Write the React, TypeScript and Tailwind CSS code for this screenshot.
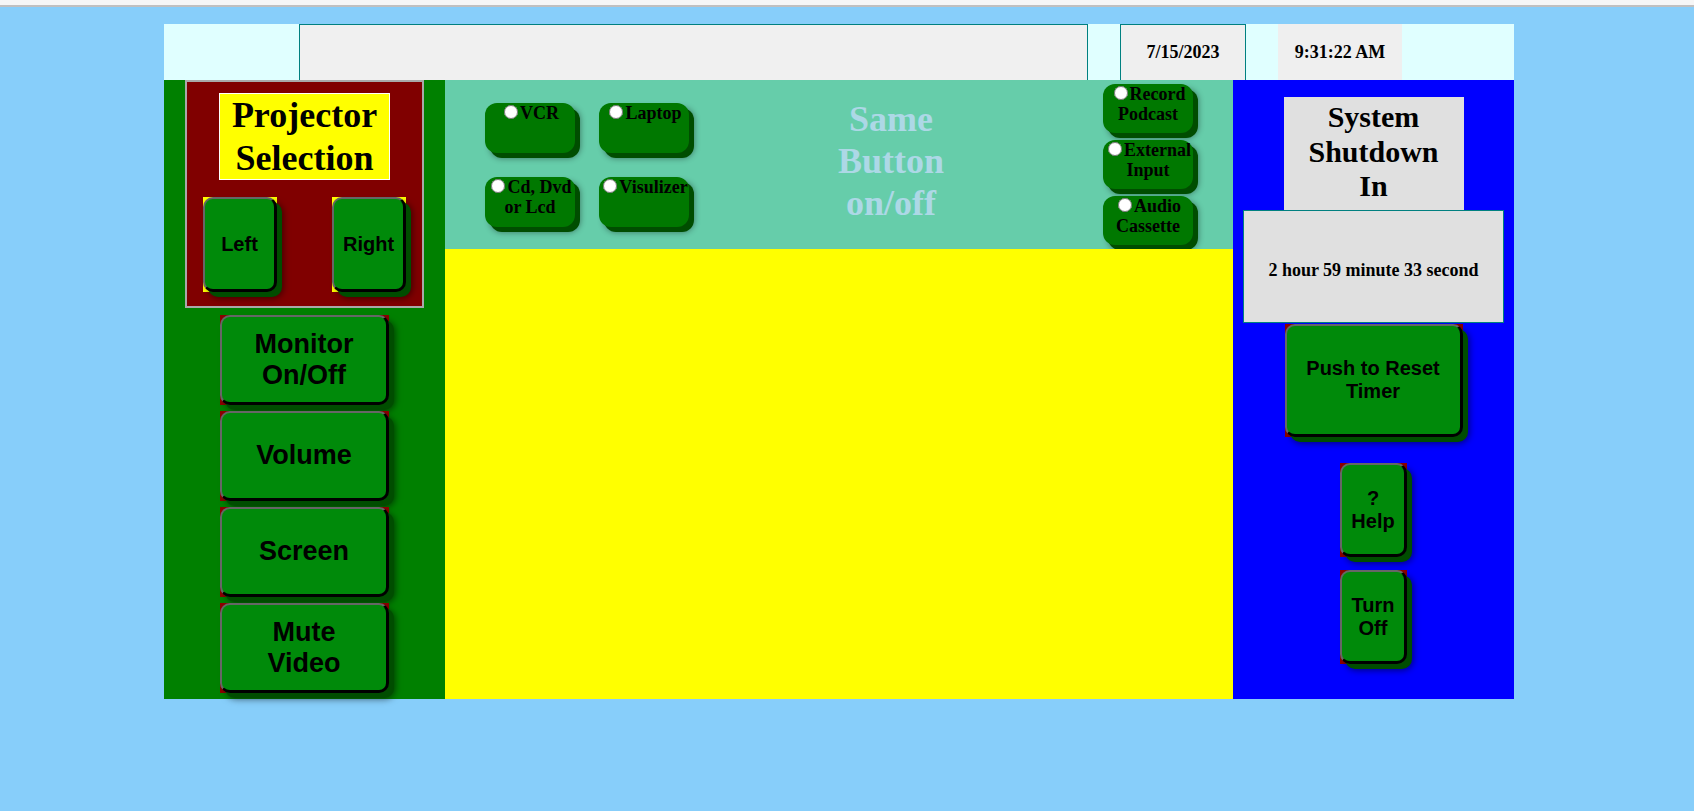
import type { ReactNode } from 'react'

const serif = "font-['Liberation_Serif','Times_New_Roman',serif]"
const sans = "font-['Liberation_Sans',Arial,sans-serif]"

function PanelButton({ wrap, size, text, children }: { wrap: string; size: string; text: string; children: ReactNode }) {
  return (
    <div className={`${wrap} ${size} shrink-0`}>
      <button
        className={`w-full h-full rounded-[10px] border-2 border-r-[3px] border-b-[3px] border-t-[#666666] border-l-[#666666] border-r-black border-b-black bg-[#008a0a] shadow-[5px_5px_0_#004d00,6px_6px_7px_rgba(0,0,0,0.55)] flex items-center justify-center text-center font-bold text-black ${sans} ${text}`}
      >
        {children}
      </button>
    </div>
  )
}

function SourceButton({ children, h }: { children: ReactNode; h: string }) {
  return (
    <label
      className={`w-[90px] ${h} rounded-[12px] bg-[#007800] shadow-[5px_5px_0_#004d00,5px_5px_6px_rgba(0,0,0,0.45)] block text-center text-[18px] leading-[20px] font-bold text-black ${serif}`}
    >
      <input type="radio" name="source" className="w-[14px] h-[14px] mt-[2px] mr-[2px] ml-[3px]" />
      {children}
    </label>
  )
}

export default function App() {
  return (
    <div className="min-h-screen bg-[#87cefa]">
      <div className="h-[5px] bg-[#f6f6f6]" />
      <div className="h-[2px] bg-[#c0c0c0]" />

      <div className="ml-[164px] mt-[17px] w-[1350px]">
        {/* header */}
        <div className="flex h-[56px] bg-[#e0ffff]">
          <div className="w-[135px]" />
          <div className="w-[789px] border border-b-0 border-[#008080] bg-[#f0f0f0]" />
          <div className="w-[32px]" />
          <div className={`w-[126px] border border-b-0 border-[#008080] bg-[#efefef] flex items-center justify-center text-[18px] font-bold ${serif}`}>
            7/15/2023
          </div>
          <div className="w-[32px]" />
          <div className={`w-[124px] bg-[#efefef] flex items-center justify-center text-[18px] font-bold ${serif}`}>
            9:31:22 AM
          </div>
        </div>

        {/* body */}
        <div className="flex h-[619px]">
          {/* left column */}
          <div className="w-[281px] bg-[#008000] flex flex-col">
            <div className="ml-[21px] w-[239px] h-[228px] border-2 border-[#a9a9a9] bg-[#800000] flex flex-col items-center">
              <div className={`mt-[11px] w-[171px] h-[87px] border border-white bg-[#ffff00] text-center text-[36px] leading-[43px] font-bold text-black ${serif}`}>
                Projector
                <br />
                Selection
              </div>
              <div className="mt-[17px] w-full px-[16px] flex justify-between">
                <PanelButton wrap="bg-[#ffff00]" size="w-[74px] h-[95px]" text="text-[20px]">Left</PanelButton>
                <PanelButton wrap="bg-[#ffff00]" size="w-[74px] h-[95px]" text="text-[20px]">Right</PanelButton>
              </div>
            </div>
            <div className="mt-[7px] ml-[56px] flex flex-col gap-[6px]">
              <PanelButton wrap="bg-[#8b0000]" size="w-[169px] h-[90px]" text="text-[27px] leading-[31px]">
                Monitor
                <br />
                On/Off
              </PanelButton>
              <PanelButton wrap="bg-[#8b0000]" size="w-[169px] h-[90px]" text="text-[27px] leading-[31px]">Volume</PanelButton>
              <PanelButton wrap="bg-[#8b0000]" size="w-[169px] h-[90px]" text="text-[27px] leading-[31px]">Screen</PanelButton>
              <PanelButton wrap="bg-[#8b0000]" size="w-[169px] h-[90px]" text="text-[27px] leading-[31px]">
                Mute
                <br />
                Video
              </PanelButton>
            </div>
          </div>

          {/* middle column */}
          <div className="w-[788px] flex flex-col">
            <div className="h-[169px] bg-[#66cdaa] flex">
              <div className="pl-[40px] pt-[23px] grid grid-cols-[90px_90px] gap-[24px] content-start">
                <SourceButton h="h-[50px]">VCR</SourceButton>
                <SourceButton h="h-[50px]">Laptop</SourceButton>
                <SourceButton h="h-[50px]">Cd, Dvd or Lcd</SourceButton>
                <SourceButton h="h-[50px]">Visulizer</SourceButton>
              </div>
              <div className={`w-[404px] pt-[18px] text-center text-[36px] leading-[42px] font-bold text-[#add8e6] ${serif}`}>
                Same
                <br />
                Button
                <br />
                on/off
              </div>
              <div className="ml-[10px] pt-[4px] flex flex-col gap-[7px]">
                <SourceButton h="h-[49px]">Record Podcast</SourceButton>
                <SourceButton h="h-[49px]">External Input</SourceButton>
                <SourceButton h="h-[49px]">Audio Cassette</SourceButton>
              </div>
            </div>
            <div className="flex-1 bg-[#ffff00]" />
          </div>

          {/* right column */}
          <div className="w-[281px] bg-[#0000ff] flex flex-col items-center">
            <div className={`mt-[17px] w-[180px] h-[113px] bg-[#e0e0e0] pt-[3px] text-center text-[30px] leading-[34.5px] font-bold text-black ${serif}`}>
              System
              <br />
              Shutdown
              <br />
              In
            </div>
            <div className={`w-[261px] h-[113px] border border-[#008080] bg-[#e0e0e0] pt-[8px] flex items-center justify-center text-[18px] font-bold text-black ${serif}`}>
              2 hour 59 minute 33 second
            </div>
            <div className="mt-[1px]">
              <PanelButton wrap="bg-[#8b0000]" size="w-[178px] h-[113px]" text="text-[20px] leading-[23px]">
                Push to Reset
                <br />
                Timer
              </PanelButton>
            </div>
            <div className="mt-[26px]">
              <PanelButton wrap="bg-[#8b0000]" size="w-[67px] h-[94px]" text="text-[20px] leading-[23px]">
                ?
                <br />
                Help
              </PanelButton>
            </div>
            <div className="mt-[13px]">
              <PanelButton wrap="bg-[#8b0000]" size="w-[67px] h-[94px]" text="text-[20px] leading-[23px]">
                Turn
                <br />
                Off
              </PanelButton>
            </div>
          </div>
        </div>
      </div>
    </div>
  )
}
